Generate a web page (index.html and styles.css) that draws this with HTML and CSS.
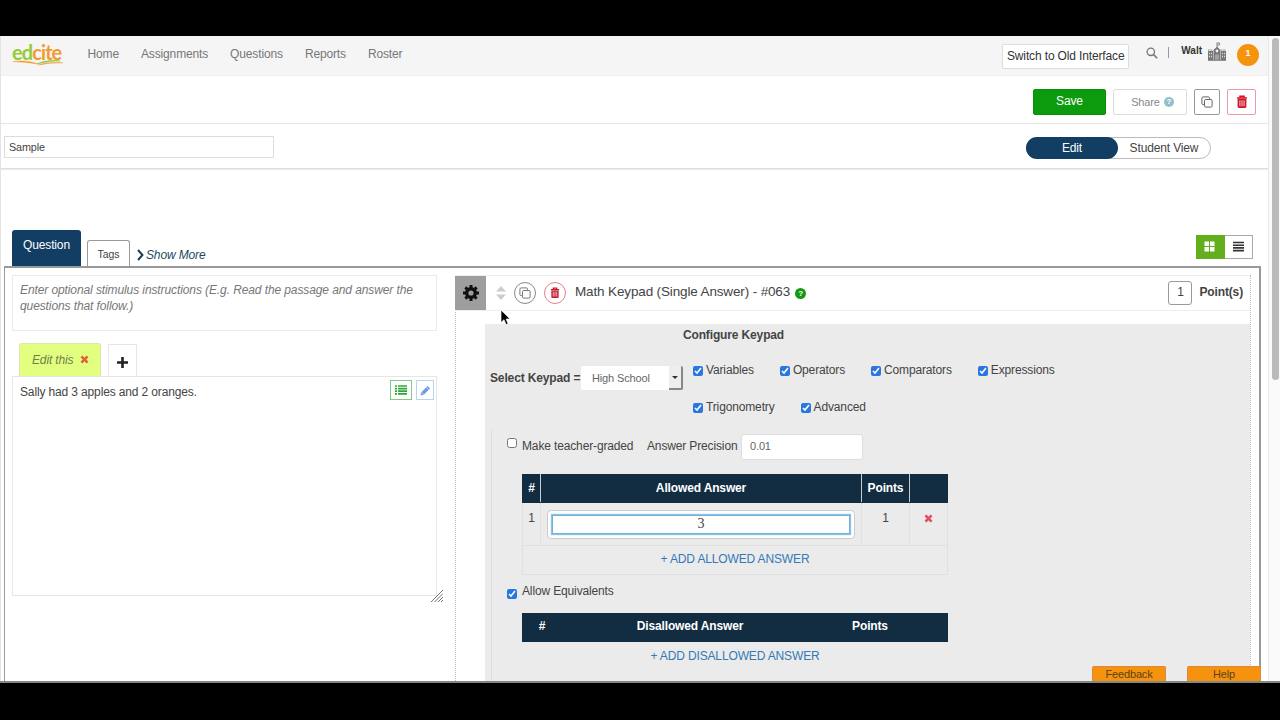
FILE: index.html
```html
<!DOCTYPE html>
<html lang="en">
  <head>
    <meta charset="utf-8" />
    <title>Edcite - Sample</title>
    <link rel="stylesheet" href="styles.css" />
  </head>
  <body>
    <!-- shared icons -->
    <svg class="sprite">
      <symbol id="copy" viewBox="0 0 12 12">
        <rect x="3.5" y="3.5" width="7.6" height="7.6" rx="1.2" fill="none" stroke="currentColor" />
        <path d="M3.4 8.6H2.2a1.3 1.3 0 0 1-1.3-1.3V2.2A1.3 1.3 0 0 1 2.2.9h5.1a1.3 1.3 0 0 1 1.3 1.3v1.2" fill="none" stroke="currentColor" />
      </symbol>
      <symbol id="trash" viewBox="0 0 12 14">
        <path d="M1 3h10M4 2.8V1.2h4v1.6" fill="none" stroke="currentColor" stroke-width="1.5" />
        <path d="M1.6 4h8.8v7.6a1.4 1.4 0 0 1-1.4 1.4H3a1.4 1.4 0 0 1-1.4-1.4z" fill="currentColor" />
        <path d="M3.9 5.3v6M6 5.3v6M8.1 5.3v6" stroke="#fff" stroke-width=".8" />
      </symbol>
      <symbol id="cross" viewBox="0 0 10 10">
        <path d="M1.6 1.6l6.8 6.8M8.4 1.6L1.6 8.4" stroke="currentColor" stroke-width="2.9" />
      </symbol>
    </svg>
    <div class="window">
      <div class="page">
        <header class="navbar">
          <div class="logo">
            <div class="logo-text"><span>ed</span>cite</div>
            <svg class="logo-swoosh" width="52" height="6" viewBox="0 0 52 6">
              <path d="M1 1.5c9-1 18-.6 25 2.6-8-1.6-16-1.8-25-2.6z" fill="#f29a2e" stroke="#f29a2e" stroke-width=".4" />
              <path d="M25 4C32 .4 41 .2 48 .8 40 1 32 2 25 4z" fill="#8cc63f" stroke="#8cc63f" stroke-width=".6" />
              <path d="M26 5c7-2.5 16-3 25-2.2-9 .2-17 .6-25 2.2z" fill="#f29a2e" stroke="#f29a2e" stroke-width=".4" />
            </svg>
          </div>
          <nav class="menu">
            <a>Home</a><a>Assignments</a><a>Questions</a><a>Reports</a><a>Roster</a>
          </nav>
          <button class="switch-btn">Switch to Old Interface</button>
          <svg class="search" width="12" height="12" viewBox="0 0 12 12">
            <circle cx="4.8" cy="4.8" r="3.7" fill="none" stroke="#777" stroke-width="1.3" />
            <path d="M7.6 7.6l3.6 3.6" stroke="#777" stroke-width="1.6" />
          </svg>
          <span class="divider"></span>
          <span class="user">Walt</span>
          <svg class="school" width="18" height="19" viewBox="0 0 18 19">
            <path d="M9 5V.6M9 1h2.5v2H9" fill="none" stroke="#888" />
            <path d="M5.500 8L9 4.600 12.500 8v10h-7zM0 9h5v9H0zM13 9h5v9h-5z" fill="#777" />
            <path d="M0 8h5M13 8h5" stroke="#888" stroke-dasharray="1.5 .8" />
            <path d="M1 11.500h3M1 14.500h3M14 11.500h3M14 14.500h3" stroke="#ddd" stroke-width="1.5" stroke-dasharray="1 1" />
            <circle cx="9" cy="9" r="1.4" fill="#eee" />
            <path d="M7.500 12.500h3V18h-3z" fill="#ccc" />
            <path d="M9 12.500V18M0 18.300h18" stroke="#777" />
          </svg>
          <span class="badge">1</span>
        </header>

        <div class="actions">
          <button class="save">Save</button>
          <button class="share">Share <span class="share-help">?</span></button>
          <button class="icon-btn copy-btn"><svg width="12" height="12"><use href="#copy" /></svg></button>
          <button class="icon-btn delete-btn"><svg width="12" height="14"><use href="#trash" /></svg></button>
        </div>

        <div class="title-row">
          <input class="title-input" type="text" value="Sample" />
          <div class="view-toggle">
            <span class="view active">Edit</span>
            <span class="view">Student View</span>
          </div>
        </div>

        <div class="tabs">
          <div class="tab question-tab">Question</div>
          <div class="tab tags-tab">Tags</div>
          <a class="show-more">
            <svg width="7" height="12" viewBox="0 0 7 12"><path d="M1 1l4.500 5L1 11" fill="none" stroke="#123b52" stroke-width="1.9" /></svg>
            Show More
          </a>
          <div class="layout-toggle">
            <span class="layout-btn active">
              <svg width="11" height="11" viewBox="0 0 11 11"><path d="M.5.5h4.500v4.500H.5zM6 .5h4.500v4.500H6zM.5 6h4.500v4.500H.5zM6 6h4.500v4.500H6z" fill="#fff" /></svg>
            </span>
            <span class="layout-btn">
              <svg width="11" height="11" viewBox="0 0 11 11"><path d="M0 1.500h11M0 4.200h11M0 6.900h11M0 9.600h11" stroke="#333" stroke-width="1.6" /></svg>
            </span>
          </div>
        </div>

        <main class="workspace">
          <section class="stimulus">
            <div class="instructions">Enter optional stimulus instructions (E.g. Read the passage and answer the questions that follow.)</div>
            <div class="stimulus-tabs">
              <div class="edit-tab">Edit this <svg width="9" height="9"><use href="#cross" /></svg></div>
              <div class="add-tab">
                <svg width="11" height="11" viewBox="0 0 11 11"><path d="M5.500 0v11M0 5.500h11" stroke="#222" stroke-width="2.6" /></svg>
              </div>
            </div>
            <div class="passage">
              <span class="passage-text">Sally had 3 apples and 2 oranges.</span>
              <span class="tool list-tool">
                <svg width="12" height="10" viewBox="0 0 12 10"><path d="M0 1h2M3 1h9M0 3.600h2M3 3.600h9M0 6.200h2M3 6.200h9M0 8.800h2M3 8.800h9" stroke="#2ea836" stroke-width="1.7" /></svg>
              </span>
              <span class="tool pencil-tool">
                <svg width="11" height="11" viewBox="0 0 11 11"><path d="M.5 10.500l.8-3.300L7.600.9l2.500 2.500-6.300 6.300z" fill="#6f9be0" /><path d="M6.300 2.200l2.500 2.500M1.300 7.200l2.500 2.500" stroke="#dbe7fa" stroke-width=".7" /></svg>
              </span>
              <svg class="grip" width="12" height="12" viewBox="0 0 12 12"><path d="M0 12L12 0M3.500 12L12 3.500M7 12l5-5M10 12l2-2" stroke="#777" /></svg>
            </div>
          </section>

          <section class="question">
            <div class="question-head">
              <div class="gear">
                <svg width="16" height="16" viewBox="0 0 16 16">
                  <circle cx="8" cy="8" r="4.3" fill="none" stroke="#111" stroke-width="3.4" />
                  <path d="M8 0v3M8 13v3M0 8h3M13 8h3M2.350 2.350l2.100 2.100M11.550 11.550l2.100 2.100M2.350 13.650l2.100-2.100M11.550 4.450l2.100-2.100" stroke="#111" stroke-width="3" />
                </svg>
              </div>
              <svg class="sorter" width="10" height="14" viewBox="0 0 10 14"><path d="M0 5.500L5 0l5 5.500zM0 8.500h10L5 14z" fill="#ccc" /></svg>
              <span class="round"><svg width="12" height="12"><use href="#copy" /></svg></span>
              <span class="round red"><svg width="10" height="12"><use href="#trash" /></svg></span>
              <span class="question-title">Math Keypad (Single Answer) - #063</span>
              <span class="help">?</span>
              <span class="points-box">1</span>
              <span class="points-label">Point(s)</span>
              <svg class="cursor" width="11" height="17" viewBox="0 0 11 17"><path d="M1 1v12.500l3-2.800 2 4.900 2.100-.9-2-4.700h4z" fill="#000" stroke="#fff" stroke-width=".7" /></svg>
            </div>

            <div class="config">
              <h3 class="config-title">Configure Keypad</h3>
              <div class="keypad-row">
                <span class="keypad-label">Select Keypad =</span>
                <div class="select"><span>High School</span><i class="arrow"></i></div>
                <div class="options">
                  <label><input type="checkbox" checked /><span>Variables</span></label>
                  <label><input type="checkbox" checked /><span>Operators</span></label>
                  <label><input type="checkbox" checked /><span>Comparators</span></label>
                  <label><input type="checkbox" checked /><span>Expressions</span></label>
                  <label><input type="checkbox" checked /><span>Trigonometry</span></label>
                  <label><input type="checkbox" checked /><span>Advanced</span></label>
                </div>
              </div>

              <div class="answers">
                <div class="precision-row">
                  <input class="graded" type="checkbox" />
                  <span class="graded-label">Make teacher-graded</span>
                  <span class="precision-label">Answer Precision</span>
                  <input class="precision" type="text" value="0.01" />
                </div>

                <table class="answer-table">
                  <colgroup><col class="col-num" /><col /><col class="col-points" /><col class="col-remove" /></colgroup>
                  <tr><th>#</th><th>Allowed Answer</th><th>Points</th><th></th></tr>
                  <tr class="answer">
                    <td>1</td>
                    <td class="math-cell"><div class="math"><div class="math-input">3</div></div></td>
                    <td>1</td>
                    <td class="remove"><svg width="9" height="9"><use href="#cross" /></svg></td>
                  </tr>
                  <tr class="add"><td colspan="4"><a>+ ADD ALLOWED ANSWER</a></td></tr>
                </table>

                <label class="equivalents"><input type="checkbox" checked /><span>Allow Equivalents</span></label>

                <div class="disallowed-head"><span>#</span><span>Disallowed Answer</span><span>Points</span></div>
                <a class="add-disallowed">+ ADD DISALLOWED ANSWER</a>
              </div>
            </div>
          </section>
        </main>
        <div class="footer-tabs"><span>Feedback</span><span>Help</span></div>
      </div>
      <div class="scrollbar"><div class="thumb"></div></div>
    </div>
  </body>
</html>
```
FILE: styles.css
```css
* {
  box-sizing: border-box;
}
body {
  margin: 0;
  padding-top: 36px;
  width: 1280px;
  height: 720px;
  overflow: hidden;
  background: #000;
  color: #444;
  font-family: "Liberation Sans", Arial, sans-serif;
  font-size: 12px;
  letter-spacing: -0.14px;
}
button,
input {
  font-family: inherit;
  font-size: inherit;
  letter-spacing: inherit;
  margin: 0;
  padding: 0;
}
input[type="checkbox"] {
  width: 10px;
  height: 10px;
  flex: none;
  accent-color: #2877e0;
}
svg {
  display: block;
  flex: none;
}
.sprite {
  display: none;
}
.window {
  display: flex;
  height: 647px;
  background: #fff;
  border-bottom: 2px solid #858585;
  overflow: hidden;
}
.page {
  position: relative;
  width: 1268px;
  height: 645px;
  border-left: 1px solid #e4e4e4;
  display: flex;
  flex-direction: column;
  overflow: hidden;
}
.scrollbar {
  width: 12px;
  background: #fafafa;
  border-left: 1px solid #e8e8e8;
  padding: 2px 1px 0 3px;
}
.thumb {
  width: 7px;
  height: 342px;
  border-radius: 4px;
  background: #bababa;
}

/* top navigation */
.navbar {
  flex: none;
  display: flex;
  align-items: flex-start;
  height: 40px;
  background: #f5f5f5;
  border-bottom: 1px solid #f0f0f0;
}
.logo {
  width: 76px;
  padding: 5px 0 0 11px;
}
.logo-text {
  height: 19px;
  line-height: 22px;
  font-family: Lato, sans-serif;
  font-weight: 700;
  font-size: 20px;
  letter-spacing: -0.9px;
  color: #f29a2e;
}
.logo-text span {
  color: #94cb38;
}
.menu {
  display: flex;
  gap: 22px;
  padding: 11px 0 0 10.500px;
  color: #777;
  line-height: 14px;
}
.switch-btn {
  width: 127px;
  height: 25px;
  margin: 8px 0 0 auto;
  padding-bottom: 2px;
  background: #fff;
  border: 1px solid #ddd;
  border-radius: 2px;
  color: #333;
  white-space: nowrap;
}
.search {
  margin: 11px 0 0 17px;
}
.divider {
  width: 1px;
  height: 11px;
  margin: 11px 0 0 10px;
  background: #999;
}
.user {
  margin: 9px 0 0 12px;
  font-size: 10px;
  line-height: 12px;
  letter-spacing: 0;
  font-weight: bold;
  color: #333;
}
.school {
  margin: 6px 0 0 6px;
}
.badge {
  width: 22px;
  height: 22px;
  margin: 8px 9px 0 11px;
  border-radius: 50%;
  background: #f5930e;
  color: #fff;
  font-size: 9px;
  font-weight: bold;
  line-height: 19px;
  text-align: center;
}

/* save / share bar */
.actions {
  flex: none;
  display: flex;
  justify-content: flex-end;
  align-items: flex-start;
  height: 48px;
  padding: 13px 12px 0 0;
  border-bottom: 1px solid #e6e6e6;
}
.actions button {
  height: 26px;
  background: #fff;
  border-radius: 2px;
}
.actions .save {
  width: 73px;
  padding-bottom: 2px;
  background: #0c9b0c;
  border: 1px solid #0a900a;
  color: #fff;
}
.share {
  display: flex;
  align-items: center;
  justify-content: center;
  gap: 4px;
  width: 74px;
  margin-left: 7px;
  padding-left: 5px !important;
  border: 1px solid #ddd;
  color: #888;
  font-size: 11px;
}
.share-help {
  width: 10px;
  height: 10px;
  margin-bottom: 1px;
  border-radius: 50%;
  background: #8fc1c8;
  color: #fff;
  font-size: 8px;
  font-weight: bold;
  line-height: 10px;
}
.icon-btn {
  display: flex;
  align-items: center;
  justify-content: center;
}
.copy-btn {
  width: 26px;
  margin-left: 7px;
  border: 1px solid #999;
  color: #666;
}
.delete-btn {
  width: 29px;
  margin-left: 7px;
  border: 1px solid #ee9aa4;
  color: #cf1225;
}

/* title and view switch */
.title-row {
  flex: none;
  display: flex;
  justify-content: space-between;
  align-items: flex-start;
  height: 45px;
  padding: 12px 57px 0 3px;
  border-bottom: 1px solid #ddd;
  box-shadow: 0 1px 1px #eee;
}
.title-input {
  width: 270px;
  height: 22px;
  padding: 0 4px 1px;
  border: 1px solid #ddd;
  font-size: 10.800px;
  color: #444;
}
.view-toggle {
  display: flex;
  width: 185px;
  height: 22px;
  margin-top: 1px;
  border: 1px solid #bbb;
  border-radius: 11px;
  line-height: 20px;
}
.view {
  flex: 1;
  text-align: center;
  color: #444;
}
.view.active {
  margin: -1px 0 -1px -1px;
  border-radius: 11px;
  background: #123e63;
  color: #fff;
  line-height: 22px;
}

/* tabs */
.tabs {
  flex: none;
  display: flex;
  align-items: flex-end;
  height: 97px;
  padding: 0 15px 0 11px;
}
.question-tab {
  width: 69px;
  height: 36px;
  border-radius: 3px 3px 0 0;
  background: #123e63;
  color: #fff;
  text-align: center;
  line-height: 31px;
}
.tags-tab {
  width: 43px;
  height: 26px;
  margin-left: 6px;
  border: 1px solid #999;
  border-bottom: 0;
  border-radius: 3px 3px 0 0;
  font-size: 10.500px;
  letter-spacing: 0;
  text-align: center;
  line-height: 27px;
}
.show-more {
  display: flex;
  align-items: center;
  gap: 2px;
  margin: 0 0 4px 7px;
  color: #1d4a60;
  font-style: italic;
  line-height: 14px;
}
.layout-toggle {
  display: flex;
  margin: 0 0 7px auto;
}
.layout-btn {
  display: flex;
  align-items: center;
  justify-content: center;
  width: 28px;
  height: 24px;
  padding-bottom: 2px;
  border: 1px solid #aaa;
  border-left: 0;
}
.layout-btn.active {
  width: 29px;
  padding-right: 2px;
  border: 0;
  background: #62ae1d;
}

/* editing area */
.workspace {
  flex: 1;
  min-height: 0;
  display: flex;
  align-items: stretch;
  margin: 0 7px 0 3px;
  padding: 7px 8px 0 7px;
  border: 1px solid #999;
  border-right-width: 2px;
  border-top-width: 2px;
  border-bottom: 0;
}
.stimulus {
  width: 425px;
}
.instructions {
  height: 56px;
  padding: 6px 7px;
  border: 1px solid #eaeaea;
  color: #777;
  font-style: italic;
  line-height: 16px;
  letter-spacing: -0.1px;
}
.stimulus-tabs {
  display: flex;
  align-items: flex-end;
  height: 45px;
  padding-left: 7px;
}
.edit-tab {
  display: flex;
  align-items: center;
  gap: 7px;
  width: 82px;
  height: 33px;
  padding: 0 0 1px 12px;
  border: 1px solid #dce8ae;
  border-bottom: 0;
  border-radius: 3px 3px 0 0;
  background: #e2ff80;
  color: #6f7f50;
  font-style: italic;
}
.edit-tab svg {
  color: #e2603a;
}
.add-tab {
  display: flex;
  align-items: center;
  justify-content: center;
  width: 29px;
  height: 32px;
  margin-left: 7px;
  padding-top: 3px;
  border: 1px solid #e6e6e6;
  border-bottom: 0;
}
.passage {
  position: relative;
  display: flex;
  align-items: flex-start;
  height: 220px;
  padding: 3px 2px 0 7px;
  border: 1px solid #e6e6e6;
}
.passage-text {
  margin: 5px auto 0 0;
  line-height: 14px;
}
.tool {
  display: flex;
  align-items: center;
  justify-content: center;
  width: 18px;
  height: 20px;
  margin-left: 4px;
  border: 1px solid #b9d3f5;
}
.list-tool {
  width: 22px;
  border-color: #7fcb84;
}
.grip {
  position: absolute;
  right: -7px;
  bottom: -7px;
}

/* question card */
.question {
  flex: 1;
  margin-left: 18px;
  border-left: 1px dotted #bbb;
  border-right: 1px dotted #bbb;
}
.question-head {
  position: relative;
  display: flex;
  align-items: center;
  height: 36px;
  margin-left: -1px;
  border: 1px solid #eee;
  border-width: 1px 0;
}
.gear {
  display: flex;
  align-items: center;
  justify-content: center;
  width: 31px;
  height: 34px;
  background: #9e9e9e;
}
.sorter {
  margin-left: 10px;
}
.round {
  display: flex;
  align-items: center;
  justify-content: center;
  width: 22px;
  height: 22px;
  margin-left: 8px;
  border: 1px solid #888;
  border-radius: 50%;
  color: #777;
}
.round.red {
  border-color: #e2808b;
  color: #c4192a;
}
.question-title {
  margin: 0 5px 4px 9px;
  font-size: 13.500px;
  letter-spacing: -0.14px;
  white-space: nowrap;
}
.help {
  width: 11px;
  height: 11px;
  border-radius: 50%;
  background: #139a13;
  color: #fff;
  font-size: 8px;
  font-weight: bold;
  line-height: 11px;
  text-align: center;
}
.points-box {
  width: 24px;
  height: 24px;
  margin-left: auto;
  border: 1px solid #999;
  border-radius: 3px;
  line-height: 21px;
  text-align: center;
}
.points-label {
  margin: 0 7px 3px;
  font-weight: bold;
}
.cursor {
  position: absolute;
  left: 45px;
  top: 33px;
}

.config {
  height: 380px;
  margin: 13px 0 0 29px;
  background: #ebebeb;
}
.config-title {
  width: 497px;
  margin: 0;
  padding-top: 4px;
  font-size: 12px;
  line-height: 14px;
  text-align: center;
}
.keypad-row {
  display: flex;
  align-items: flex-start;
  height: 88px;
  padding: 24px 0 0 5px;
}
.keypad-label {
  width: 91px;
  padding-top: 5px;
  font-weight: bold;
  line-height: 14px;
  white-space: nowrap;
}
.select {
  display: flex;
  justify-content: space-between;
  width: 102px;
  height: 24px;
  padding-left: 11px;
  border-radius: 2px;
  background: #fff;
  color: #666;
  font-size: 11px;
  line-height: 24px;
}
.arrow {
  display: flex;
  align-items: center;
  justify-content: center;
  width: 14px;
  background: #eee;
  border-right: 2px solid #888;
  border-bottom: 2px solid #888;
  border-radius: 0 2px 2px 0;
}
.arrow::after {
  content: "";
  border: 3px solid transparent;
  border-top: 3px solid #333;
  border-bottom: 0;
}
.options {
  display: flex;
  flex-wrap: wrap;
  align-content: flex-start;
  gap: 23px 26px;
  width: 400px;
  padding: 0 0 0 10px;
  margin-top: -2px;
}
.options label {
  display: flex;
  align-items: center;
  gap: 3px;
  height: 14px;
}
.options label span {
  margin-bottom: 2px;
}

.answers {
  margin-left: 6px;
  padding-left: 15px;
  height: 260px;
  border-left: 1px solid #ddd;
}
.precision-row {
  display: flex;
  align-items: center;
  height: 33px;
}
.precision-row .graded {
  margin-bottom: 7px;
}
.graded-label {
  width: 126px;
  padding: 0 0 1px 5px;
}
.precision-label {
  width: 94px;
  margin-left: 4px;
  padding-bottom: 1px;
}
.precision {
  width: 122px;
  height: 26px;
  padding: 0 8px 1px;
  border: 1px solid #ddd;
  border-radius: 3px;
  color: #666;
  font-size: 11px;
}
.answer-table {
  width: 426px;
  margin: 11px 0 0 15px;
  border-collapse: collapse;
  table-layout: fixed;
}
.col-num {
  width: 18px;
}
.col-points {
  width: 48px;
}
.col-remove {
  width: 38px;
}
.answer-table th {
  height: 28px;
  padding: 0 0 1px;
  background: #122d42;
  border: 1px solid #122d42;
  border-right-color: #ccc;
  color: #fff;
}
.answer-table th:last-child {
  border-right-color: #122d42;
}
.answer-table td {
  padding: 0;
  border: 1px solid #e0e0e0;
  text-align: center;
  vertical-align: top;
}
.answer-table .answer td {
  height: 43px;
  padding-top: 8px;
}
.answer-table .answer .math-cell {
  padding-top: 7px;
}
.remove svg {
  margin: 3px auto 0;
  color: #e64a60;
}
.math {
  height: 29px;
  margin: 0 6px;
  padding: 4px;
  border: 1px solid #ccc;
  border-radius: 4px;
  background: #fff;
}
.math-input {
  height: 19px;
  border: 1px solid #6fb1dc;
  box-shadow: 0 0 1px 1px #8cc4e8;
  font-family: "Liberation Serif", serif;
  font-size: 14px;
  line-height: 16px;
}
.answer-table .add td {
  height: 29px;
  padding-bottom: 3px;
  vertical-align: middle;
}
.answers a {
  color: #337ab7;
}
.equivalents {
  display: flex;
  align-items: center;
  gap: 5px;
  height: 34px;
}
.equivalents input {
  margin-top: 4px;
}
.equivalents span {
  margin-bottom: 2px;
}
.disallowed-head {
  display: flex;
  width: 426px;
  height: 29px;
  margin: 4px 0 0 15px;
  background: #122d42;
  color: #fff;
  font-weight: bold;
  line-height: 27px;
  text-align: center;
}
.disallowed-head span:first-child {
  width: 40px;
}
.disallowed-head span:nth-child(2) {
  width: 256px;
}
.disallowed-head span:last-child {
  width: 104px;
}
.add-disallowed {
  display: block;
  width: 426px;
  margin-left: 15px;
  line-height: 28px;
  text-align: center;
}

/* pinned to the bottom edge of the page */
.footer-tabs {
  position: absolute;
  right: 7px;
  bottom: 0;
  display: flex;
  gap: 21px;
}
.footer-tabs span {
  width: 74px;
  height: 15px;
  border-radius: 2px 2px 0 0;
  background: #f5930e;
  border: 1px solid #e0873f;
  border-bottom: 0;
  color: #5c4218;
  font-size: 11px;
  line-height: 15px;
  text-align: center;
}
```
